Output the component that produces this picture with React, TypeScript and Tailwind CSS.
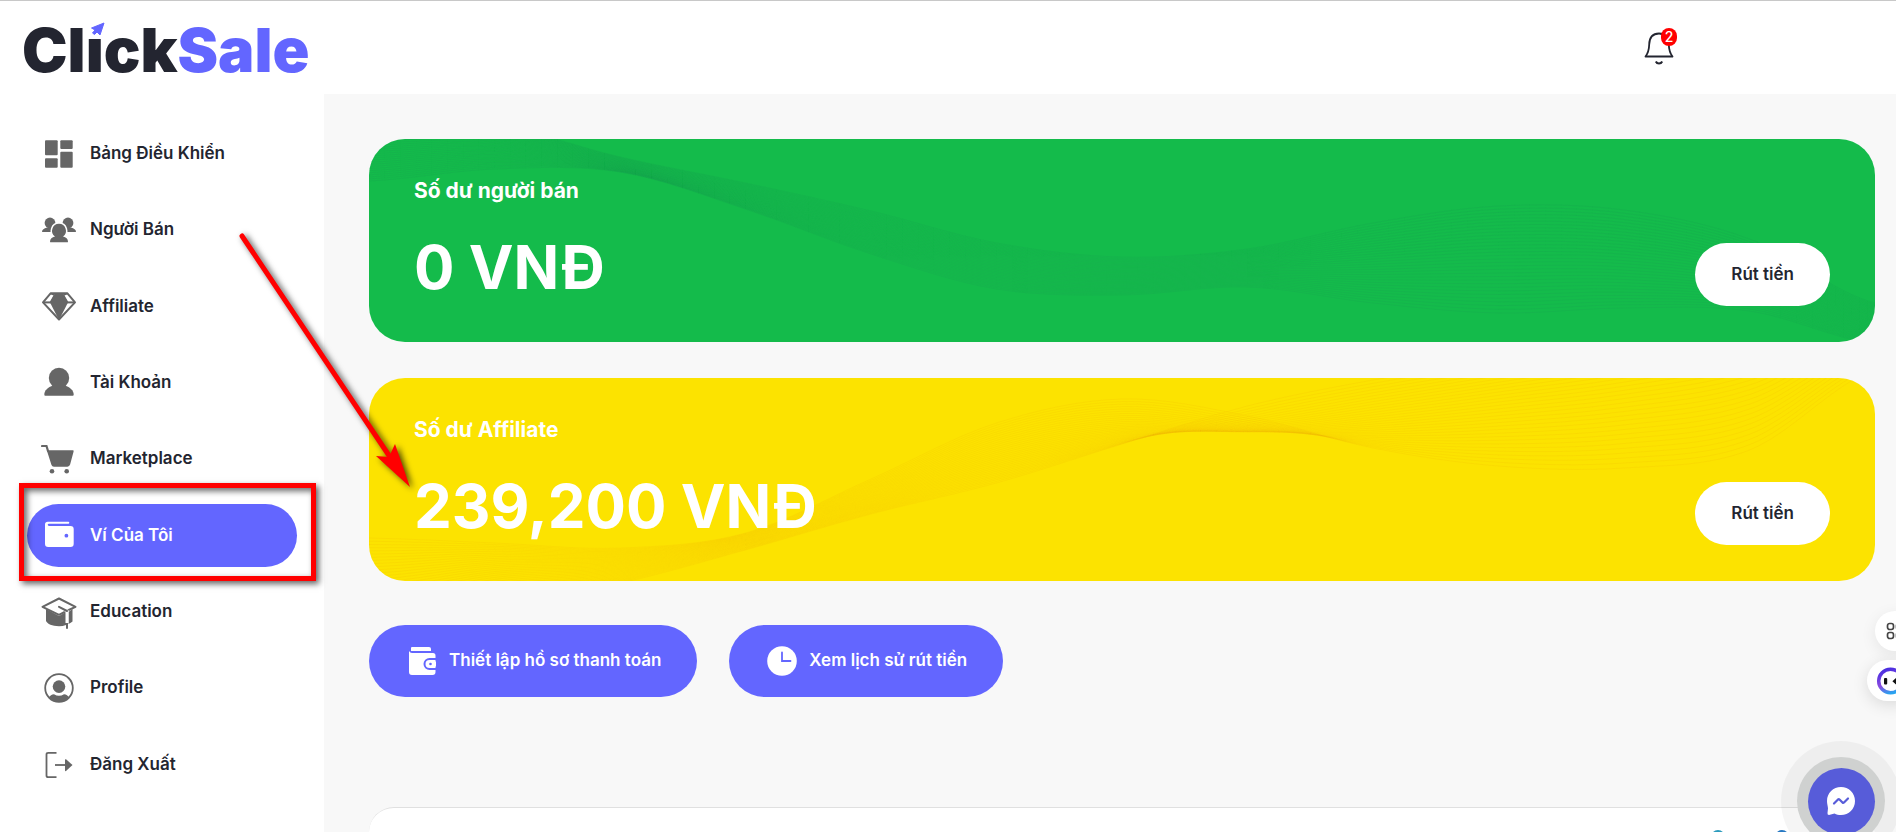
import { ReactNode } from "react";

type IconProps = { children: ReactNode };

const NavIcon = ({ children }: IconProps) => (
    <svg viewBox="0 0 36 36" className="size-9 shrink-0" fill="currentColor" aria-hidden="true">
        {children}
    </svg>
);

const navItems = [
    {
        label: "Bảng Điều Khiển",
        icon: (
            <>
                <rect x="4" y="4.3" width="12.7" height="15" rx="1" />
                <rect x="4" y="22.3" width="12.7" height="9.4" rx="1" />
                <rect x="19.3" y="4.3" width="12.4" height="8.7" rx="1" />
                <rect x="19.3" y="15.7" width="12.4" height="16" rx="1" />
            </>
        ),
    },
    {
        label: "Người Bán",
        icon: (
            <>
                <circle cx="9" cy="11" r="5.4" />
                <circle cx="27" cy="11" r="5.4" />
                <path d="M1 20c0-2.5 2-3.6 5-4.5h6V20zM35 20c0-2.5-2-3.6-5-4.5h-6V20z" />
                <path
                    d="M18 11.8a7 7 0 0 1 4 12.7c3 .7 5 2.5 5 5.2 0 .4-.3.6-.6.6H9.6c-.3 0-.6-.2-.6-.6 0-2.7 2-4.5 5-5.2a7 7 0 0 1 4-12.7z"
                    stroke="#fff"
                    strokeWidth="3"
                    paintOrder="stroke"
                />
            </>
        ),
    },
    {
        label: "Affiliate",
        icon: (
            <>
                <path
                    d="M9.8 5.2h16.4l7.8 9.2L18 31.5 2 14.4z"
                    fill="none"
                    stroke="currentColor"
                    strokeWidth="2"
                    strokeLinejoin="round"
                />
                <path d="M2 14.4h32" stroke="currentColor" strokeWidth="2" />
                <path d="M14.5 5h7l5.5 9.4L18 32 9 14.4z" />
                <path d="M9.5 5.5 13.5 7 9.5 14M26.5 5.5 22.5 7l4 7" fill="none" stroke="currentColor" strokeWidth="1.5" />
            </>
        ),
    },
    {
        label: "Tài Khoản",
        icon: (
            <>
                <circle cx="18" cy="13" r="10.2" />
                <path d="M12 20.5h12c5 1.7 8.7 5 8.7 9 0 .8-.3 1.2-.9 1.2H4.2c-.6 0-.9-.4-.9-1.2 0-4 3.7-7.3 8.7-9z" />
            </>
        ),
    },
    {
        label: "Marketplace",
        icon: (
            <>
                <path d="M1 5h4.500l1.500 5" fill="none" stroke="currentColor" strokeWidth="2.2" strokeLinecap="round" />
                <path d="M5.8 9.2h26q1.200 0 .8 1.2l-3.500 13.2q-.6 2.1-2.700 2.1H13q-2 0-2.600-2z" />
                <circle cx="11" cy="30.3" r="2.3" />
                <circle cx="25.7" cy="30.3" r="2.3" />
            </>
        ),
    },
    {
        label: "Ví Của Tôi",
        active: true,
        icon: (
            <path
                fillRule="evenodd"
                d="M6.8 4.7h20.5q1 0 1 1t-1 1.100H8q-1.300 0-1.300 1T8 8.900h21.500q3.200 0 3.200 3.200v14.700q0 3.200-3.200 3.200H7.200Q4 30 4 26.800V7.500q0-2.800 2.800-2.800zM25.400 16.800a1.900 1.900 0 1 0 0 3.800 1.900 1.900 0 0 0 0-3.800z"
            />
        ),
    },
    {
        label: "Education",
        icon: (
            <>
                <path d="M5 15 18 22 25 18V31q-3 1.2-7 1.2C11 32.2 6.5 30 5 27z" />
                <path d="M27.5 18 31.5 15v12.5q-1.500 1.5-4 2.4z" />
                <path
                    d="M18 4.5 34.5 12.8 25.5 17 18 20.8 1.5 12.8z"
                    fill="#fff"
                    stroke="currentColor"
                    strokeWidth="2"
                    strokeLinejoin="round"
                />
                <path d="M18 12.8 26 17v12" fill="none" stroke="#fff" strokeWidth="3" />
                <path d="M18 12.8 26 17" fill="none" stroke="currentColor" strokeWidth="2" strokeLinecap="round" />
                <path d="M26 29v5.7" stroke="currentColor" strokeWidth="2" />
            </>
        ),
    },
    {
        label: "Profile",
        icon: (
            <>
                <circle cx="18" cy="18" r="13.8" fill="none" stroke="currentColor" strokeWidth="1.8" />
                <circle cx="18" cy="16.6" r="6.3" />
                <path d="M8 27.5q1.500-3 5-3.2 5 3 10 0 3.500.2 5 3.2-4.500 4.500-10 4.500t-10-4.500z" />
            </>
        ),
    },
    {
        label: "Đăng Xuất",
        icon: (
            <>
                <path d="M15.5 5.800H7.200q-1.700 0-1.700 1.700v21q0 1.700 1.700 1.700h8.300" fill="none" stroke="currentColor" strokeWidth="1.8" />
                <path d="M14 18h12" stroke="currentColor" strokeWidth="1.8" />
                <path d="M25 12.3 31.5 18 25 24q-1 .5-1-.8V13q0-1.200 1-.7z" />
            </>
        ),
    },
];

type Wave = { from: number[]; via: number[]; to: number[]; color: string };

const greenWave: Wave = {
    from: [-25, -15, 18, 44, 72, 104, 118, 110, 84, 67, 71, 100, 164],
    via: [10, 4, 28, 60, 95, 128, 138, 130, 124, 116, 120, 140, 185],
    to: [42, 30, 33, 70, 115, 150, 156, 148, 164, 174, 169, 172, 205],
    color: "#1c8f55",
};

const yellowWave: Wave = {
    from: [160, 165, 170, 155, 101, 45, 21, 38, 70, 88, 90, 72, -8],
    via: [210, 190, 185, 162, 124, 80, 62, 74, 54, 30, 12, -10, -60],
    to: [260, 225, 205, 172, 136, 105, 66, 28, 2, -18, -40, -70, -110],
    color: "#efb400",
};

// Catmull-Rom spline through evenly spaced points
function smoothPath(ys: number[]) {
    const step = 1506 / (ys.length - 1);
    let d = `M0 ${ys[0].toFixed(1)}`;
    for (let i = 0; i < ys.length - 1; i++) {
        const prev = ys[Math.max(i - 1, 0)];
        const next = ys[i + 1];
        const after = ys[Math.min(i + 2, ys.length - 1)];
        const c1 = ys[i] + (next - prev) / 6;
        const c2 = next - (after - ys[i]) / 6;
        const x = i * step;
        d += ` C${(x + step / 3).toFixed(1)} ${c1.toFixed(1)} ${(x + (step * 2) / 3).toFixed(1)} ${c2.toFixed(1)} ${(x + step).toFixed(1)} ${next.toFixed(1)}`;
    }
    return d;
}

const WaveLines = ({ from, via, to, color }: Wave) => {
    const count = 32;
    return (
        <svg
            viewBox="0 0 1506 203"
            preserveAspectRatio="none"
            className="absolute inset-0 size-full"
            fill="none"
            stroke={color}
            strokeOpacity="0.14"
            aria-hidden="true"
        >
            {Array.from({ length: count }, (_, n) => {
                const t = n / (count - 1);
                const ys = from.map((y, i) => (1 - t) * (1 - t) * y + 2 * t * (1 - t) * via[i] + t * t * to[i]);
                return <path key={n} d={smoothPath(ys)} />;
            })}
        </svg>
    );
};

type BalanceCardProps = { title: string; amount: string; className: string; wave: Wave };

const BalanceCard = ({ title, amount, className, wave }: BalanceCardProps) => (
    <section className={`relative overflow-hidden rounded-[36px] px-[45px] py-9 ${className}`}>
        <WaveLines {...wave} />
        <div className="relative flex items-end justify-between">
            <div className="text-white">
                <h2 className="text-[21px] leading-8 font-bold">{title}</h2>
                <p className="mt-6 mb-[3px] text-[60px] leading-[72px] font-bold">{amount}</p>
            </div>
            <button
                type="button"
                className="h-[63px] cursor-pointer rounded-full bg-white px-9 text-[17px] font-semibold text-[#232530]"
            >
                Rút tiền
            </button>
        </div>
    </section>
);

export default function App() {
    return (
        <div className="relative flex h-screen flex-col overflow-hidden border-t border-[#c8c8c8] bg-white font-['Inter',sans-serif] text-[#232530]">
            <header className="flex h-[93px] shrink-0 items-center justify-between pt-1 pr-[222px] pl-[22px]">
                <a href="#" className="relative text-[61px] leading-[62px] font-black">
                    Click<span className="text-[#6366ff]">Sale</span>
                    <svg viewBox="0 0 20 18" className="absolute top-0 left-[66px] h-[18px] w-5" aria-hidden="true">
                        <path d="M0 0h20v18H0z" fill="#fff" />
                        <path d="M16 4 3.500 9l3.500 2-2.500 3 2 1.500 2.500-2.500 3 3z" fill="#6366ff" stroke="#6366ff" strokeLinejoin="round" />
                    </svg>
                </a>

                <button type="button" aria-label="Thông báo" className="relative mb-1 cursor-pointer">
                    <svg viewBox="0 0 30 34" className="h-[34px] w-[30px]" fill="none" stroke="#232530" strokeWidth="1.8" aria-hidden="true">
                        <path d="M1.500 25.500Q5 21 5.200 13.500C5.400 6.500 9 2.500 15 2.500s9.600 4 9.800 11q.2 7.500 3.700 12z" strokeLinejoin="round" />
                        <path d="M11.800 30.500q1 2 3.200 2t3.200-2" strokeWidth="2" />
                    </svg>
                    <span className="absolute -top-[3px] -right-[3px] flex h-[18px] w-4 items-center justify-center rounded-full bg-[#ff0000] text-[14px] leading-none font-medium text-white">
                        2
                    </span>
                </button>
            </header>

            <div className="flex min-h-0 flex-1">
                {/* Sidebar */}
                <aside className="flex w-[324px] shrink-0 flex-col px-[27px] pt-7 pb-9">
                    <nav className="flex flex-1 flex-col justify-between">
                        {navItems.map((item) => (
                            <a
                                key={item.label}
                                href="#"
                                className={`flex h-[63px] items-center gap-[13px] rounded-full pl-[14px] text-[17px] font-semibold ${
                                    item.active ? "bg-[#6366ff] text-white" : "text-[#666666]"
                                }`}
                            >
                                <NavIcon>{item.icon}</NavIcon>
                                <span className={item.active ? "text-white" : "text-[#232530]"}>{item.label}</span>
                            </a>
                        ))}
                    </nav>
                </aside>

                {/* Wallet */}
                <main className="flex min-w-0 flex-1 flex-col bg-[#f8f8f8] pt-[45px] pr-[21px] pl-[45px]">
                    <div className="flex flex-col gap-9">
                        <BalanceCard title="Số dư người bán" amount="0 VNĐ" className="bg-[#14bb4b]" wave={greenWave} />
                        <BalanceCard title="Số dư Affiliate" amount="239,200 VNĐ" className="bg-[#fce300]" wave={yellowWave} />
                    </div>

                    <div className="mt-11 flex gap-8">
                        <button
                            type="button"
                            className="flex h-[72px] cursor-pointer items-center gap-3 rounded-full bg-[#6366ff] px-9 text-[17px] font-semibold text-white"
                        >
                            <svg viewBox="0 0 32 32" className="size-8" aria-hidden="true">
                                <path d="M7 2h17q2 0 2 2v2H6V3q0-1 1-1z" fill="#fff" />
                                <path d="M4 6q1 2 3 2h21q2.500 0 2.500 2.500V27q0 3-3 3H7q-3 0-3-3z" fill="#fff" />
                                <path d="M31 14h-6.500a5 5 0 0 0 0 10H31" fill="none" stroke="#6366ff" strokeWidth="2" />
                                <path d="M31 16.500h-6a2.500 2.500 0 0 0 0 5h6z" fill="#fff" />
                                <circle cx="25.5" cy="19" r="1.3" fill="#6366ff" />
                            </svg>
                            Thiết lập hồ sơ thanh toán
                        </button>
                        <button
                            type="button"
                            className="flex h-[72px] cursor-pointer items-center gap-3 rounded-full bg-[#6366ff] px-9 text-[17px] font-semibold text-white"
                        >
                            <svg viewBox="0 0 32 32" className="size-8" aria-hidden="true">
                                <circle cx="17" cy="16" r="14.8" fill="#fff" />
                                <path d="M17 7.500V16h8.500" fill="none" stroke="#6366ff" strokeWidth="1.8" strokeLinecap="round" />
                            </svg>
                            Xem lịch sử rút tiền
                        </button>
                    </div>

                    <section className="mt-[110px] flex flex-1 justify-end gap-[50px] overflow-hidden rounded-t-[28px] border-t border-[#e0e0e0] bg-white pt-[22px] pr-[86px]">
                        <span className="size-[14px] shrink-0 rounded-full bg-[#2b9bbd]" />
                        <span className="size-[14px] shrink-0 rounded-full bg-[#2678c2]" />
                    </section>
                </main>
            </div>

            {/* Edge shortcuts, partly hidden behind the window edge */}
            <button
                type="button"
                aria-label="Tiện ích"
                className="absolute top-[610px] -right-[19px] flex size-10 items-center rounded-full bg-white pl-[11px] shadow-[0_4px_16px_rgba(0,0,0,0.08)]"
            >
                <svg viewBox="0 0 18 18" className="size-[18px]" fill="none" stroke="#444" strokeWidth="1.7" aria-hidden="true">
                    <rect x="1.5" y="1.5" width="6" height="6" rx="2.2" />
                    <rect x="1.5" y="10.5" width="6" height="6" rx="2.2" />
                    <rect x="10.5" y="1.5" width="6" height="6" rx="2.2" />
                    <rect x="10.5" y="10.5" width="6" height="6" rx="2.2" />
                </svg>
            </button>
            <button
                type="button"
                aria-label="Trợ lý"
                className="absolute top-[659px] -right-[19px] flex h-[41px] w-12 items-center rounded-full bg-white pl-[9px] shadow-[0_4px_16px_rgba(0,0,0,0.12)]"
            >
                <svg viewBox="0 0 28 28" className="size-7 shrink-0" aria-hidden="true">
                    <defs>
                        <linearGradient id="ring" x1="0.3" y1="0" x2="0.6" y2="1">
                            <stop offset="0" stopColor="#4a2ee0" />
                            <stop offset="0.6" stopColor="#8a4be0" />
                            <stop offset="1" stopColor="#28a4f0" />
                        </linearGradient>
                    </defs>
                    <circle cx="14.5" cy="14" r="11.8" fill="none" stroke="url(#ring)" strokeWidth="3.5" />
                    <rect x="8" y="11" width="3.2" height="6.5" rx="1" fill="#111" />
                    <path d="M21 11l-3.500 3.200L21 17.500" fill="#111" stroke="#111" strokeWidth="1.5" />
                </svg>
            </button>

            {/* Chat */}
            <button
                type="button"
                aria-label="Messenger"
                className="absolute -right-[5px] -bottom-[29px] flex size-[120px] items-center justify-center rounded-full bg-black/4"
            >
                <span className="flex size-[88px] items-center justify-center rounded-full bg-[#cfd1d0]">
                    <span className="flex size-[67px] items-center justify-center rounded-full bg-[#575cd9]">
                        <svg viewBox="0 0 30 30" className="size-[30px]" aria-hidden="true">
                            <path d="M15 1C7.200 1 1 7 1 15c0 2.600.8 5 1 7.200L1.500 27q-.3 2 1.500 2l5.500-1.500c2 1 4 1.500 6.500 1.500 7.800 0 14-6 14-14S22.800 1 15 1z" fill="#fff" />
                            <path d="m8 17.500 4-4q.8-.6 1.500 0l3 3q.8.600 1.500 0l4-4" fill="none" stroke="#575cd9" strokeWidth="2.2" strokeLinecap="round" strokeLinejoin="round" />
                        </svg>
                    </span>
                </span>
            </button>

            {/* Guide marks */}
            <div className="pointer-events-none absolute top-[482px] left-[19px] h-[98px] w-[297px] border-5 border-[#ff0000] shadow-[3px_3px_6px_rgba(0,0,0,0.6),inset_3px_3px_6px_rgba(0,0,0,0.6)]" />
            <svg
                viewBox="230 225 200 280"
                className="pointer-events-none absolute top-[224px] left-[230px] h-[280px] w-[200px] drop-shadow-[3px_2px_3px_rgba(0,0,0,0.7)]"
                aria-hidden="true"
            >
                <path d="M242 236 390 457" stroke="#ff0000" strokeWidth="5" strokeLinecap="round" />
                <path d="M410 487 376 456l13 1 6-13z" fill="#ff0000" />
            </svg>
        </div>
    );
}
